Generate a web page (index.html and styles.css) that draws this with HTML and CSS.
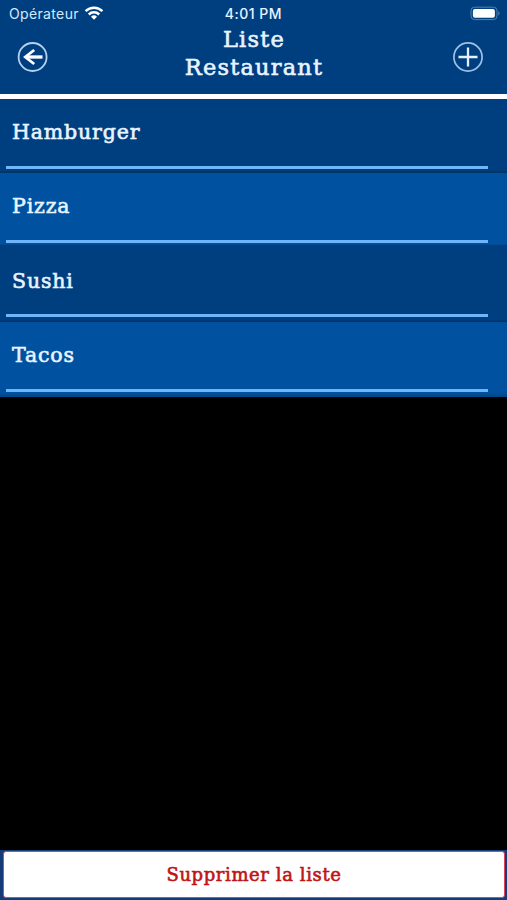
FILE: index.html
```html
<!DOCTYPE html>
<html lang="fr">
<head>
<meta charset="utf-8">
<title>Liste Restaurant</title>
<link rel="stylesheet" href="styles.css">
</head>
<body>
<header class="header">
  <div class="status">
    <div class="carrier"><span>Opérateur</span>
      <svg class="wifi" width="20" height="15" viewBox="0 0 20 15"><g fill="none" stroke="#fff" stroke-width="2.5"><path d="M1.6 5.1a12 12 0 0 1 16.8 0"/><path d="M4.8 8.5a7.4 7.4 0 0 1 10.4 0"/></g><path d="M10 13.7 7 10.7a4.3 4.3 0 0 1 6 0z" fill="#fff"/></svg>
    </div>
    <time class="clock">4:01 PM</time>
    <svg class="battery" width="32" height="15" viewBox="0 0 32 15"><rect x="2" y="1.2" width="26" height="12.4" rx="3.6" fill="none" stroke="#5580b0"/><rect x="3.9" y="3" width="22" height="8.8" rx="2" fill="#fff"/><path d="M29.3 5.1q2.6 2.3 0 4.6z" fill="#5580b0"/></svg>
  </div>
  <div class="nav">
    <svg width="32" height="32" viewBox="0 0 32 32" fill="none"><circle cx="15.6" cy="16" r="14" stroke="#b4d1f0" stroke-width="1.8"/><path d="M25.5 16H9" stroke="#fff" stroke-width="3.3"/><path d="M17.2 9 8.3 16l8.9 7" stroke="#fff" stroke-width="2.8"/></svg>
    <h1 class="title"><span>Liste</span><br>Restaurant</h1>
    <svg width="32" height="32" viewBox="0 0 32 32" fill="none"><circle cx="16" cy="16" r="14.1" stroke="#a0c1e5" stroke-width="1.7"/><path d="M6.5 16h19M16 6.5v19" stroke="#e4f1ff" stroke-width="2.3"/></svg>
  </div>
</header>
<main class="list">
  <div class="row"><span>Hamburger</span></div>
  <div class="row light short"><span>Pizza</span></div>
  <div class="row"><span>Sushi</span></div>
  <div class="row light"><span>Tacos</span></div>
</main>
<footer class="footer"><button class="delete">Supprimer la liste</button></footer>
</body>
</html>
```
FILE: styles.css
```css
* { box-sizing: border-box; }
body {
  margin: 0;
  height: 900px;
  display: flex;
  flex-direction: column;
  background: #000;
  color: #e8f4ff;
  font-family: "DejaVu Serif", serif;
  overflow: hidden;
}
.header {
  height: 99px;
  background: #003f7f;
  border-bottom: 5px solid #fff;
}
.status {
  height: 26px;
  display: grid;
  grid-template-columns: 1fr auto 1fr;
  align-items: center;
  padding: 0 6px 0 9px;
  font: 14px Inter, sans-serif;
}
.carrier { display: flex; align-items: center; gap: 5px; letter-spacing: .35px; color: #d5e8fb; }
.clock { font-weight: 500; letter-spacing: .5px; margin-right: 3px; }
.battery { justify-self: end; }
.nav {
  height: 62px;
  display: flex;
  justify-content: space-between;
  align-items: center;
  padding: 0 23px 0 17px;
}
.title {
  margin: -9px 0 0 7px;
  font-size: 22.5px;
  line-height: 28px;
  font-weight: 400;
  text-align: center;
  letter-spacing: 1.2px;
  -webkit-text-stroke: .6px currentColor;
}
.row {
  height: 74.4px;
  padding: 19px 19px 0 6px;
  background: linear-gradient(#003f7f 0 71px, #003163 74px);
}
.light { background: linear-gradient(#0052a0 0 71px, #004786 74px); }
.short { background: linear-gradient(#0052a0 0 71px, #003f7f 72.5px); }
.row span {
  display: block;
  height: 50.5px;
  padding-left: 6px;
  font-size: 20.5px;
  line-height: 28px;
  letter-spacing: .85px;
  border-bottom: 3px solid #70b5fa;
  -webkit-text-stroke: .6px currentColor;
}
.footer {
  height: 50px;
  margin-top: auto;
  padding: 1px 2px 2px 3px;
  background: #153b78;
}
.delete {
  display: block;
  width: 100%;
  height: 47px;
  padding: 0;
  border: 1px solid #d5475a;
  border-radius: 3px;
  background: #fff;
  color: #c01414;
  font: 18px "DejaVu Serif", serif;
  letter-spacing: .6px;
  -webkit-text-stroke: .6px currentColor;
}
```
